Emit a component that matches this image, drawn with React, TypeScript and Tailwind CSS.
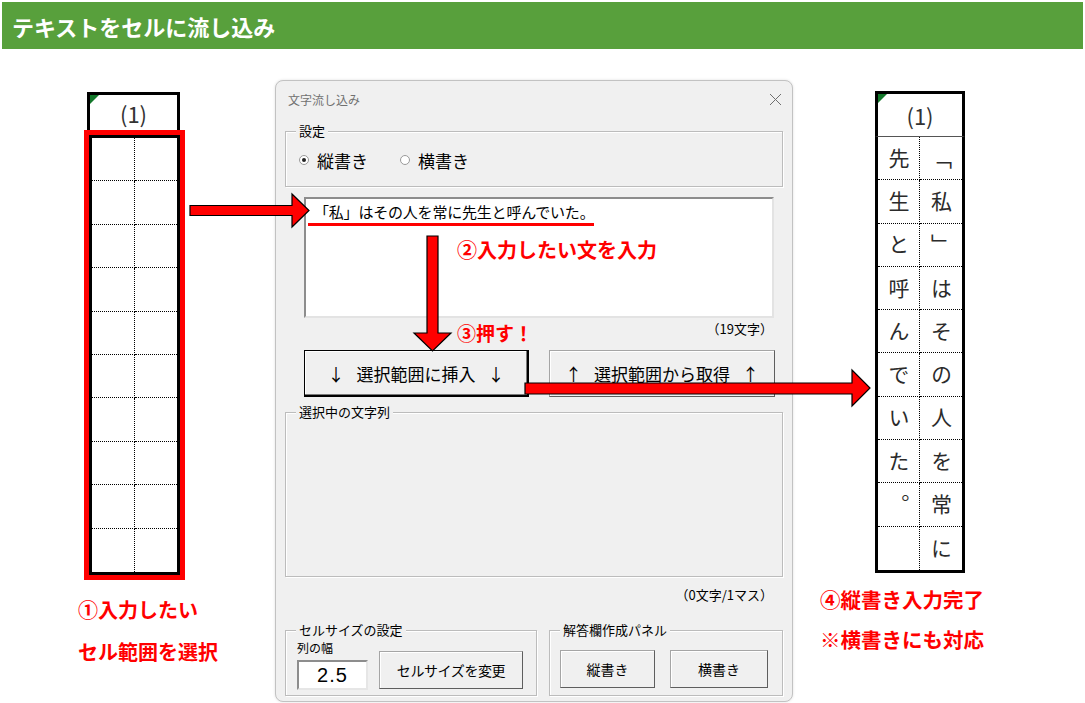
import React from 'react';

const jp = "font-['Noto_Sans_CJK_JP',sans-serif]";

const vertical = [
  ['先', '「'],
  ['生', '私'],
  ['と', '」'],
  ['呼', 'は'],
  ['ん', 'そ'],
  ['で', 'の'],
  ['い', '人'],
  ['た', 'を'],
  ['。', '常'],
  ['', 'に'],
];

function CornerMark() {
  return (
    <div className="absolute left-0 top-0 h-0 w-0 border-r-[9px] border-t-[9px] border-r-transparent border-t-[#13782b]" />
  );
}

function cellLine(i: number) {
  const col = i % 2;
  const row = Math.floor(i / 2);
  return [
    'border-dotted border-black',
    col === 0 ? 'border-r' : '',
    row < 9 ? 'border-b' : '',
  ].join(' ');
}

function SelectedRange() {
  return (
    <div className="mt-[43px] w-[101px] shrink-0">
      <div className="relative ml-[3px] flex h-[38px] w-[93px] items-center justify-center border-[3px] border-b-0 border-black bg-white text-[22px] leading-none text-[#333]">
        <CornerMark />
        (1)
      </div>
      <div className="h-[450px] border-[5px] border-[#ff0000]">
        <div className="grid h-full grid-cols-2 grid-rows-10 border-[3px] border-black bg-white">
          {Array.from({ length: 20 }).map((_, i) => (
            <div key={i} className={cellLine(i)} />
          ))}
        </div>
      </div>
      <div className="-ml-[6px] w-[160px] whitespace-nowrap text-[20px] font-bold leading-[20px] text-[#ff0000]">
        <div className="mt-[20px]">①入力したい</div>
        <div className="mt-[22px]">セル範囲を選択</div>
      </div>
    </div>
  );
}

function FilledRange() {
  return (
    <div className="ml-[82px] mt-[42px] w-[90px] shrink-0">
      <div className="relative flex h-[46px] items-center justify-center border-[3px] border-b border-black border-b-[#555] bg-white text-[22px] leading-none text-[#333]">
        <CornerMark />
        (1)
      </div>
      <div className="grid h-[436px] grid-cols-2 grid-rows-10 border-[3px] border-t-0 border-black bg-white">
        {vertical.flatMap((pair, row) =>
          pair.map((ch, col) => (
            <div
              key={`${row}-${col}`}
              className={`flex items-center justify-center text-[21px] leading-none text-[#2b2b2b] [writing-mode:vertical-rl] ${cellLine(row * 2 + col)}`}
            >
              {ch}
            </div>
          ))
        )}
      </div>
      <div className="-ml-[55px] w-[180px] whitespace-nowrap text-[20.5px] font-bold leading-[20px] text-[#ff0000]">
        <div className="mt-[16px]">④縦書き入力完了</div>
        <div className="mt-[20px]">※横書きにも対応</div>
      </div>
    </div>
  );
}

function GroupBox({
  label,
  className,
  children,
}: {
  label: string;
  className?: string;
  children?: React.ReactNode;
}) {
  return (
    <div
      className={`relative border border-[#bcbcbc] shadow-[1px_1px_0_#ffffff,inset_1px_1px_0_#ffffff] ${className ?? ''}`}
    >
      <span className="absolute -top-[9px] left-[10px] bg-[#f0f0f0] px-[3px] text-[13px] leading-[16px] text-black">
        {label}
      </span>
      {children}
    </div>
  );
}

function Radio({ checked, label }: { checked?: boolean; label: string }) {
  return (
    <div className="flex items-center gap-[8px]">
      <div className="flex h-[10px] w-[10px] items-center justify-center rounded-full border border-[#9a9a9a] bg-white">
        {checked && <div className="h-[4px] w-[4px] rounded-full bg-[#222]" />}
      </div>
      <span className="text-[17px] leading-none">{label}</span>
    </div>
  );
}

function WinButton({
  children,
  primary,
  className,
}: {
  children: React.ReactNode;
  primary?: boolean;
  className?: string;
}) {
  return (
    <button
      className={`flex items-center justify-center bg-[#f0f0f0] leading-none text-black ${
        primary
          ? 'border border-b-2 border-r-2 border-black shadow-[inset_-1px_-1px_0_#7a7a7a,inset_1px_1px_0_#ffffff]'
          : 'border border-[#a5a5a5] border-b-[#5e5e5e] border-r-[#5e5e5e] shadow-[inset_1px_1px_0_#ffffff]'
      } ${className ?? ''}`}
    >
      {children}
    </button>
  );
}

function FlowDialog() {
  return (
    <div className="ml-[90px] mt-[31px] flex h-[622px] w-[518px] shrink-0 flex-col rounded-[8px] border border-[#c2c2c2] bg-[#f0f0f0] px-[9px] text-black shadow-[0_0_3px_rgba(0,0,0,0.12)]">
      <div className="flex h-[37px] items-center justify-between pl-[3px] pr-[1px]">
        <span className="text-[12px] leading-none text-[#707070]">文字流し込み</span>
        <svg width="13" height="13" viewBox="0 0 13 13">
          <path d="M1 1 L12 12 M12 1 L1 12" stroke="#6f6f6f" strokeWidth="1" />
        </svg>
      </div>

      <GroupBox label="設定" className="mt-[13px] h-[56px]">
        <div className="flex h-full items-center gap-[32px] pl-[13px] pt-[2px]">
          <Radio checked label="縦書き" />
          <Radio label="横書き" />
        </div>
      </GroupBox>

      <div className="ml-[19px] mt-[10px] h-[121px] w-[470px] border-2 border-[#8d8d8d] border-b-[#e3e3e3] border-r-[#e3e3e3] bg-white pl-[8px] pt-[4px] text-[15px] leading-[18px] tracking-[-0.2px]">
        「私」はその人を常に先生と呼んでいた。
      </div>

      <div className="h-[32px] pr-[10px] pt-[3px] text-right text-[13px] leading-[16px]">（19文字）</div>

      <div className="ml-[19px] flex gap-[20px]">
        <WinButton primary className="h-[47px] w-[225px] gap-[12px] text-[17px]">
          <span>↓</span>
          <span>選択範囲に挿入</span>
          <span>↓</span>
        </WinButton>
        <WinButton className="h-[47px] w-[226px] gap-[12px] text-[17px]">
          <span>↑</span>
          <span>選択範囲から取得</span>
          <span>↑</span>
        </WinButton>
      </div>

      <GroupBox label="選択中の文字列" className="mt-[15px] h-[165px]" />

      <div className="h-[53px] pr-[10px] pt-[10px] text-right text-[13px] leading-[16px]">（0文字/1マス）</div>

      <div className="flex gap-[12px]">
        <GroupBox label="セルサイズの設定" className="flex h-[66px] w-[252px] pl-[11px] pt-[10px]">
          <div className="flex flex-col">
            <span className="text-[12px] leading-[14px]">列の幅</span>
            <div className="mt-[5px] flex h-[30px] w-[71px] items-center justify-center border-2 border-[#8d8d8d] border-b-[#e6e6e6] border-r-[#e6e6e6] bg-white font-['Liberation_Sans',sans-serif] text-[20px] leading-none tracking-[1px]">
              2.5
            </div>
          </div>
          <WinButton className="ml-[11px] mt-[10px] h-[38px] w-[144px] text-[14px] tracking-[-0.4px]">
            セルサイズを変更
          </WinButton>
        </GroupBox>
        <GroupBox label="解答欄作成パネル" className="flex h-[66px] w-[234px] gap-[15px] pl-[10px] pt-[19px]">
          <WinButton className="h-[38px] w-[95px] text-[14px]">縦書き</WinButton>
          <WinButton className="h-[38px] w-[98px] text-[14px]">横書き</WinButton>
        </GroupBox>
      </div>
    </div>
  );
}

function Callouts() {
  return (
    <>
      <svg className="pointer-events-none absolute left-0 top-0" width="1085" height="703">
        <rect x="308" y="223" width="286" height="3" fill="#ff0000" />
        <g fill="#ff0000" stroke="#000" strokeWidth="1.2" strokeLinejoin="miter">
          <polygon points="190,205.5 292,205.5 292,194 309,210.5 292,227 292,215.5 190,215.5" />
          <polygon points="427,236 438,236 438,333 451,333 432.5,351 414,333 427,333" />
          <polygon points="525,383 852,383 852,370 870,388 852,406 852,394 525,394" />
        </g>
      </svg>
      <div className="absolute left-[457px] top-[240px] whitespace-nowrap text-[20px] font-bold leading-[20px] text-[#ff0000]">
        ②入力したい文を入力
      </div>
      <div className="absolute left-[457px] top-[323px] whitespace-nowrap text-[19px] font-bold leading-[20px] text-[#ff0000]">
        ③押す！
      </div>
    </>
  );
}

export default function App() {
  return (
    <div className={`relative h-[703px] w-[1085px] overflow-hidden bg-white ${jp}`}>
      <div className="mx-[2px] mt-[2px] flex h-[47px] items-center bg-[#58a03c] pl-[10px]">
        <h1 className="text-[22px] font-bold leading-none text-white">テキストをセルに流し込み</h1>
      </div>
      <div className="flex items-start">
        <div className="ml-[84px] flex">
          <SelectedRange />
        </div>
        <FlowDialog />
        <FilledRange />
      </div>
      <Callouts />
    </div>
  );
}
